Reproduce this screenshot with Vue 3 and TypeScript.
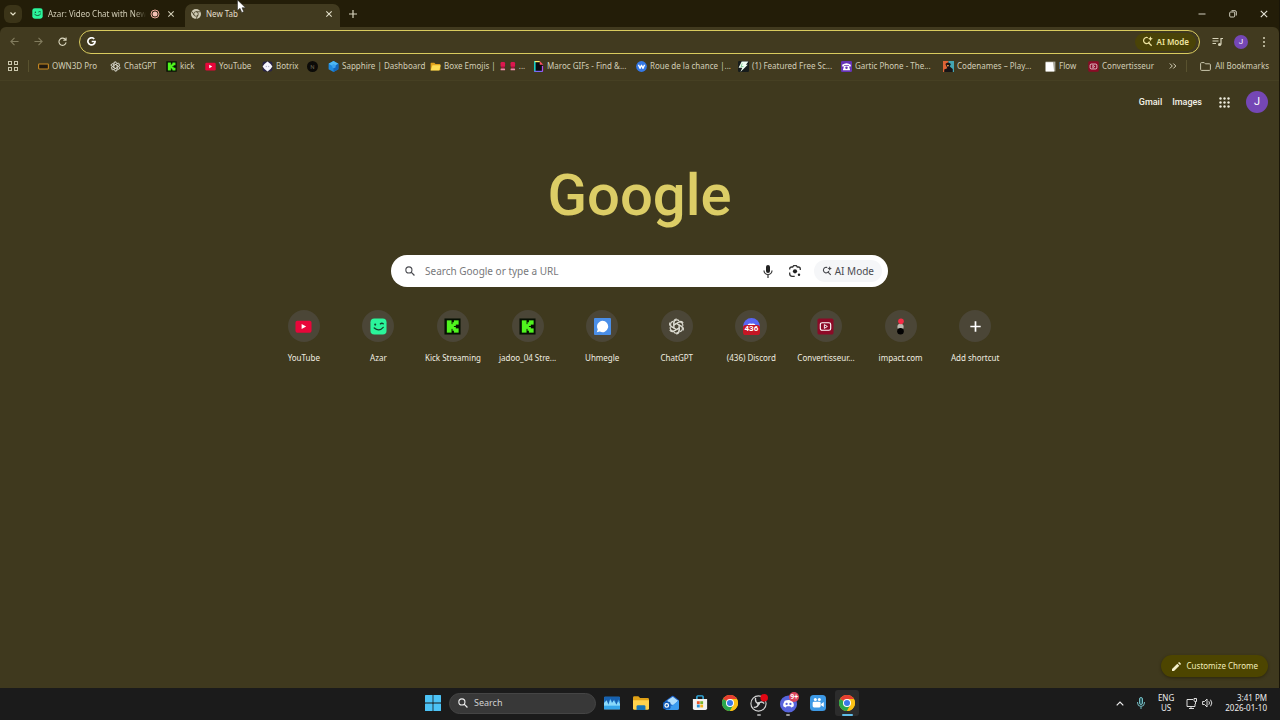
<script setup lang="ts">
import { ref } from 'vue'

interface Item {
  icon: string
  label: string
}

const address = ref('')
const query = ref('')
const taskQuery = ref('')

const bookmarks: Item[] = [
  { icon: 'own3d', label: 'OWN3D Pro' },
  { icon: 'chatgpt', label: 'ChatGPT' },
  { icon: 'kick', label: 'kick' },
  { icon: 'youtube', label: 'YouTube' },
  { icon: 'botrix', label: 'Botrix' },
  { icon: 'ncircle', label: '' },
  { icon: 'sapphire', label: 'Sapphire | Dashboard' },
  { icon: 'folder', label: 'Boxe Emojis |' },
  { icon: 'giphy', label: 'Maroc GIFs - Find &...' },
  { icon: 'wheel', label: 'Roue de la chance |...' },
  { icon: 'bolt', label: '(1) Featured Free Sc...' },
  { icon: 'gartic', label: 'Gartic Phone - The...' },
  { icon: 'codenames', label: 'Codenames – Play...' },
  { icon: 'flow', label: 'Flow' },
  { icon: 'convert', label: 'Convertisseur' },
]

const shortcuts: Item[] = [
  { icon: 'youtube', label: 'YouTube' },
  { icon: 'azar', label: 'Azar' },
  { icon: 'kick', label: 'Kick Streaming' },
  { icon: 'kick', label: 'jadoo_04 Stre...' },
  { icon: 'uhmegle', label: 'Uhmegle' },
  { icon: 'chatgpt', label: 'ChatGPT' },
  { icon: 'discord436', label: '(436) Discord' },
  { icon: 'convert', label: 'Convertisseur...' },
  { icon: 'impact', label: 'impact.com' },
  { icon: 'plus', label: 'Add shortcut' },
]

const apps = [
  { icon: 'widgets', label: 'Monitor', state: '' },
  { icon: 'explorer', label: 'File Explorer', state: '' },
  { icon: 'outlook', label: 'Outlook', state: '' },
  { icon: 'store', label: 'Microsoft Store', state: '' },
  { icon: 'chrome', label: 'Chrome', state: '' },
  { icon: 'obs', label: 'OBS Studio', state: 'open' },
  { icon: 'discord', label: 'Discord', state: 'open' },
  { icon: 'camera', label: 'Camera', state: '' },
  { icon: 'chrome', label: 'Chrome window', state: 'active' },
]
</script>

<template>
  <svg class="sprite" aria-hidden="true">
    <symbol id="youtube" viewBox="0 0 18 18">
      <rect x="0.5" y="3" width="17" height="12.500" rx="2" fill="#e8063a" />
      <path d="M7 6.300v5.400L11.800 9z" fill="#fff" />
    </symbol>
    <symbol id="azar" viewBox="0 0 18 18">
      <rect x="0.5" y="0.5" width="17" height="17" rx="4" fill="#2bf59b" />
      <circle cx="5.500" cy="7" r="1.100" fill="#14412c" />
      <path d="M11 6.200q1.600-1.200 3 0M4.500 10.500q5 4.500 9.500-.6" fill="none" stroke="#14412c" stroke-width="1.400" stroke-linecap="round" />
    </symbol>
    <symbol id="kick" viewBox="0 0 18 18">
      <rect x="0.5" y="0.5" width="17" height="17" fill="#061003" />
      <g fill="#50f51e">
        <rect x="3" y="2.500" width="5" height="13" />
        <rect x="7" y="6.500" width="3.500" height="5" />
        <rect x="9" y="4.500" width="3.500" height="4" />
        <rect x="9" y="9.500" width="3.500" height="4" />
        <rect x="10.500" y="2.500" width="5" height="4.500" />
        <rect x="10.500" y="11" width="5" height="4.500" />
      </g>
    </symbol>
    <symbol id="uhmegle" viewBox="0 0 18 18">
      <rect width="18" height="18" rx="1" fill="#4a8ee8" />
      <path d="M9 3a6 6 0 1 1-2.800 11.300L3 15l1-3A6 6 0 0 1 9 3z" fill="#fff" />
    </symbol>
    <symbol id="chatgpt" viewBox="0 0 18 18">
      <g fill="none" stroke="#deddd3" stroke-width="1.200">
        <path v-for="n in 6" :key="n" :transform="`rotate(${n * 60} 9 9)`" d="M6.200 10.600V5.200a3.200 3.200 0 0 1 5.600-2.100M7.500 6.600l4.300-2.500a3.200 3.200 0 0 1 4.300 1.200" />
      </g>
    </symbol>
    <symbol id="discord436" viewBox="0 0 18 18">
      <circle cx="9" cy="9" r="9" fill="#5865f2" />
      <path d="M4.500 8q1-3 4.500-2 3.500-1 4.500 2z" fill="#fff" />
      <rect y="7.500" width="18" height="10.500" rx="3" fill="#c51624" />
    </symbol>
    <symbol id="convert" viewBox="0 0 18 18">
      <rect x="0.5" y="0.5" width="17" height="17" rx="2" fill="#8c0a27" />
      <rect x="3.500" y="5" width="11" height="8" rx="2" fill="none" stroke="#fff" stroke-width="1.200" />
      <path d="M7.800 7v4l3.200-2z" fill="none" stroke="#fff" />
    </symbol>
    <symbol id="impact" viewBox="0 0 18 18">
      <circle cx="9" cy="9.500" r="3.300" fill="#b9b7ae" />
      <circle cx="9.500" cy="3.500" r="3" fill="#f32b45" />
      <circle cx="9" cy="14" r="3.500" fill="#020202" />
    </symbol>
    <symbol id="plus" viewBox="0 0 18 18">
      <path d="M9 3.500v11M3.500 9h11" stroke="#fff" stroke-width="1.800" />
    </symbol>
    <symbol id="own3d" viewBox="0 0 18 18">
      <rect x="1" y="5" width="16" height="8" rx="1" fill="#211a10" stroke="#c98a22" stroke-width="1.800" />
    </symbol>
    <symbol id="botrix" viewBox="0 0 18 18">
      <rect x="1" y="1" width="16" height="16" rx="3" fill="#292447" />
      <path d="m9 1 4 3 1 1 3 4-3 4-1 1-4 3-4-3-1-1-3-4 3-4 1-1z" fill="#f7f6ff" />
      <path d="M7 8v2M11 8v2" stroke="#8a86a8" stroke-width="1.200" />
    </symbol>
    <symbol id="sapphire" viewBox="0 0 18 18">
      <path d="m9 0 8 4.500v9L9 18l-8-4.500v-9z" fill="#1f8ade" />
      <path d="m9 0 8 4.500-8 4.500-8-4.500z" fill="#4db8f5" />
      <path d="M9 9v9l8-4.500v-9z" fill="#1466bb" />
      <path d="m6 7 3-2 4 2-1 4-4 1z" fill="#3ba2ed" />
    </symbol>
    <symbol id="folder" viewBox="0 0 18 18">
      <path d="M1 4q0-1 1-1h5l2 2h7q1 0 1 1v9H1z" fill="#e2a31c" />
      <path d="M4 7h13.500L15 15.500H1z" fill="#ffdd53" />
    </symbol>
    <symbol id="lips" viewBox="0 0 10 14">
      <rect x="2" y="0" width="7" height="8" rx="2" fill="#dc174f" />
      <rect x="3" y="7" width="5" height="3" fill="#a70e3c" />
      <rect x="2" y="10" width="7" height="3" rx="1" fill="#ef8ba9" />
    </symbol>
    <symbol id="giphy" viewBox="0 0 18 18">
      <path d="M3 1h8l5 5v11H3z" fill="#0b0910" />
      <path d="M3 0v17" stroke="#19d8cf" stroke-width="2.500" />
      <path d="M2 17h14" stroke="#7c68f4" stroke-width="2" />
      <path d="M15.500 8v9" stroke="#b24cf0" stroke-width="2" />
      <path d="M11 0v6h6z" fill="#fa5262" />
      <path d="M3 1h8" stroke="#fff16b" stroke-width="2" />
    </symbol>
    <symbol id="wheel" viewBox="0 0 18 18">
      <circle cx="9" cy="9" r="8.800" fill="#3478e5" />
      <path d="m4 6 2.500 6L9 7l2.500 5L14 6" fill="none" stroke="#fff" stroke-width="2.200" stroke-linejoin="round" />
    </symbol>
    <symbol id="bolt" viewBox="0 0 18 18">
      <rect width="18" height="18" rx="2" fill="#171c1c" />
      <path d="M6 1h11l-4 5h3L4 18l3-7H1z" fill="#f1fff4" />
      <path d="m7 4-2 5h4" stroke="#49b268" fill="none" />
    </symbol>
    <symbol id="gartic" viewBox="0 0 18 18">
      <rect width="18" height="18" rx="2" fill="#6533b6" />
      <path d="M2 6q7-5 14 0v3h-3V7H5v2H2zM5 8h8l2 7H3z" fill="#fff" />
      <circle cx="9" cy="11" r="2" fill="#6533b6" />
    </symbol>
    <symbol id="codenames" viewBox="0 0 18 18">
      <rect width="9" height="18" fill="#df6436" />
      <rect x="9" width="9" height="18" fill="#43a5b2" />
      <path d="M4 5q4-5 9 0l-2 4 5 4v5H2v-4l5-2z" fill="#171416" />
      <path d="m6 6 4 1-2 3z" fill="#f6a052" />
    </symbol>
    <symbol id="flow" viewBox="0 0 18 18">
      <rect x="1" y="1" width="16" height="16" fill="#aaa89c" />
      <path d="M1 2h12l2 15H1z" fill="#fff" />
    </symbol>
    <symbol id="chrome" viewBox="0 0 18 18">
      <circle cx="9" cy="9" r="9" fill="#fbc116" />
      <path d="M9 9 1.200 4.500A9 9 0 0 1 16.800 4.500z" fill="#e63e31" />
      <path d="M9 9 1.200 4.500A9 9 0 0 0 9 18l4-7z" fill="#2aa64c" />
      <path d="M9 4.500h7.800A9 9 0 0 1 9 18l4-7z" fill="#fbc116" />
      <circle cx="9" cy="9" r="4.500" fill="#fff" />
      <circle cx="9" cy="9" r="3.400" fill="#3978e8" />
    </symbol>
    <symbol id="chrome-mono" viewBox="0 0 18 18">
      <circle cx="9" cy="9" r="9" fill="#cfcbb5" />
      <g fill="none" stroke="#413a1f" stroke-width="1.500">
        <circle cx="9" cy="9" r="4" />
        <path d="M9 5h8M5.500 11 1.500 4.500M12.500 11 9 18" />
      </g>
      <circle cx="9" cy="9" r="2.600" fill="#cfcbb5" />
    </symbol>
    <symbol id="spark-search" viewBox="0 0 18 18">
      <path d="M9.500 2.800A5 5 0 1 0 12.300 9M10.800 11l5 5" fill="none" stroke="currentColor" stroke-width="2" />
      <path d="M13.800.5q.5 3.500 4 4-3.500.5-4 4-.5-3.500-4-4 3.500-.5 4-4z" fill="currentColor" />
    </symbol>
    <symbol id="search" viewBox="0 0 18 18">
      <circle cx="7" cy="7" r="5.500" fill="none" stroke="currentColor" stroke-width="2" />
      <path d="m11 11 6 6" stroke="currentColor" stroke-width="2.200" />
    </symbol>
    <symbol id="widgets" viewBox="0 0 18 18">
      <rect x="0" y="2" width="18" height="14" rx="1" fill="#2f8fdc" />
      <path d="M0 3q0-1 1-1h16q1 0 1 1v4l-2-2-2 6-2-6-2 4-3-5-2 6-2-3-2 3z" fill="#1761b0" />
      <path d="m0 16V9l3-3 2 5 2-6 2 4 2-3 3 5 2-4 2 3v6z" fill="#8ad9fa" />
      <path d="M0 12h18v4H0z" fill="#35a6ea" />
    </symbol>
    <symbol id="explorer" viewBox="0 0 18 18">
      <path d="M0 3q0-1.500 1.500-1.500H6l2 2h8.500Q18 3.500 18 5v11H0z" fill="#e0a116" />
      <path d="M0 6h18v9q0 1.500-1.500 1.500h-15Q0 16.500 0 15z" fill="#ffd34d" />
      <path d="M4 17v-4q0-1.500 1.500-1.500h7q1.500 0 1.500 1.500v4z" fill="#1574b8" />
    </symbol>
    <symbol id="outlook" viewBox="0 0 18 18">
      <path d="m2 7 8-6q1-.5 2 0l6 5v9q0 2-2 2H4q-2 0-2-2z" fill="#1b5fc4" />
      <path d="m5 6 6-4 6 4.500-5 5-6-2z" fill="#aeddfb" />
      <path d="m3 11 7 1 8-6v9q0 2-2 2H5q-2 0-2-2z" fill="#3b9bee" />
      <rect y="7.500" width="8.500" height="8.500" rx="2" fill="#125bb4" />
      <circle cx="4.200" cy="11.700" r="2" fill="none" stroke="#fff" stroke-width="1.400" />
    </symbol>
    <symbol id="store" viewBox="0 0 18 18">
      <path d="M5.500 5V2q0-1 1-1h5q1 0 1 1v3" fill="none" stroke="#35b6ee" stroke-width="1.600" />
      <path d="M1 4.500h16V15q0 2-2 2H3q-2 0-2-2z" fill="#f2f2f2" />
      <rect x="5.500" y="7" width="3.200" height="3.200" fill="#ec5428" />
      <rect x="9.300" y="7" width="3.200" height="3.200" fill="#7bb82d" />
      <rect x="5.500" y="10.800" width="3.200" height="3.200" fill="#248fd5" />
      <rect x="9.300" y="10.800" width="3.200" height="3.200" fill="#f5b31c" />
    </symbol>
    <symbol id="obs" viewBox="0 0 20 20">
      <circle cx="10" cy="10" r="8" fill="#1d1d1f" stroke="#d4d4d4" stroke-width="1.200" />
      <path d="M10 10q-4-1-3-6M10 10q3-3 6 0M10 10q0 4-5 4" fill="none" stroke="#d4d4d4" stroke-width="1.400" />
      <circle cx="10" cy="10" r="1.600" fill="#d4d4d4" />
      <circle cx="16" cy="4" r="4" fill="#e30613" />
    </symbol>
    <symbol id="discord" viewBox="0 0 20 20">
      <circle cx="10" cy="10.500" r="9" fill="#5764dc" />
      <path d="M6 7q4-1.500 8 0 2 3 1.500 6-2 1.500-3 1l-.5-1H8l-.5 1q-1 .5-3-1Q4 10 6 7z" fill="#fff" />
      <circle cx="8" cy="10.500" r="1.200" fill="#5764dc" />
      <circle cx="12" cy="10.500" r="1.200" fill="#5764dc" />
    </symbol>
    <symbol id="camera" viewBox="0 0 18 18">
      <rect width="18" height="18" rx="4" fill="#3d99e5" />
      <circle cx="6" cy="5" r="1.700" fill="#fff" />
      <circle cx="10.500" cy="5" r="1.700" fill="#fff" />
      <rect x="3" y="7.500" width="9" height="6.500" rx="1.500" fill="#fff" />
      <path d="m12.500 10 3-2v5.500l-3-2z" fill="#fff" />
    </symbol>
    <symbol id="close" viewBox="0 0 12 12">
      <path d="m2 2 8 8M10 2l-8 8" stroke="currentColor" stroke-width="1.600" />
    </symbol>
  </svg>

  <div class="desktop">
    <div class="browser">
      <header class="tabs">
        <button class="tab-search" aria-label="Search tabs">
          <svg width="6" height="4" viewBox="0 0 6 4"><path d="m.5.5 2.500 2.500L5.500.5" fill="none" stroke="#e6e2c8" stroke-width="1.200" /></svg>
        </button>
        <div class="tab">
          <svg class="tab-icon"><use href="#azar" /></svg>
          <span class="tab-title fade">Azar: Video Chat with New</span>
          <svg class="recording" viewBox="0 0 10 10"><circle cx="5" cy="5" r="4" fill="none" stroke="#e9a99b" /><circle cx="5" cy="5" r="2.500" fill="#f3c0b4" /></svg>
          <button class="close" aria-label="Close Azar"><svg><use href="#close" /></svg></button>
        </div>
        <div class="tab current">
          <svg class="tab-icon small"><use href="#chrome-mono" /></svg>
          <span class="tab-title">New Tab</span>
          <button class="close" aria-label="Close New Tab"><svg><use href="#close" /></svg></button>
        </div>
        <button class="new-tab" aria-label="New tab">
          <svg width="8" height="8" viewBox="0 0 8 8"><path d="M4 0v8M0 4h8" stroke="#d8d4bd" stroke-width="1.200" /></svg>
        </button>
        <div class="window-buttons">
          <button aria-label="Minimize"><svg viewBox="0 0 8 8"><path d="M.5 4h7" stroke="#d2cfbe" /></svg></button>
          <button aria-label="Restore"><svg viewBox="0 0 8 8"><rect x=".7" y="2" width="5" height="5" rx="1" fill="none" stroke="#d2cfbe" /><path d="M2.500.7H6q1.300 0 1.300 1.300v3.500" fill="none" stroke="#d2cfbe" /></svg></button>
          <button aria-label="Close window"><svg viewBox="0 0 8 8"><path d="m.8.8 6.400 6.400M7.200.8.8 7.200" stroke="#e6e3d6" stroke-width="1.100" /></svg></button>
        </div>
      </header>

      <div class="toolbar">
        <button class="nav dim" aria-label="Back"><svg viewBox="0 0 10 10"><path d="M9.500 5H1M5 1 1 5l4 4" /></svg></button>
        <button class="nav dim" aria-label="Forward"><svg viewBox="0 0 10 10"><path d="M.5 5H9M5 1l4 4-4 4" /></svg></button>
        <button class="nav" aria-label="Reload"><svg viewBox="0 0 10 10"><path d="M8.500 3.200A4 4 0 1 0 9 6M9 .5v3.200H5.800" /></svg></button>
        <div class="omnibox">
          <svg class="g" viewBox="0 0 10 10" aria-hidden="true"><path d="M8 2.200A4 4 0 1 0 9 5H5.200" fill="none" stroke="#fff" stroke-width="1.900" /></svg>
          <input v-model="address" aria-label="Address and search bar" />
          <button class="omni-ai"><svg><use href="#spark-search" /></svg>AI Mode</button>
        </div>
        <button class="tool" aria-label="Media controls">
          <svg width="11" height="10" viewBox="0 0 11 10"><path d="M.5 1.500h6M.5 4h6M.5 6.500H4M9 7.500V1.500h2" fill="none" stroke="#d7d3b9" stroke-width="1.200" /><circle cx="7.600" cy="7.500" r="1.600" fill="#d7d3b9" /></svg>
        </button>
        <button class="avatar mini" aria-label="Profile">J</button>
        <button class="tool" aria-label="Chrome menu">
          <svg width="4" height="10" viewBox="0 0 4 10" fill="#d7d3b9"><circle cx="2" cy="1" r="1" /><circle cx="2" cy="5" r="1" /><circle cx="2" cy="9" r="1" /></svg>
        </button>
      </div>

      <nav class="bookmarks" aria-label="Bookmarks">
        <button class="grid-button" aria-label="Tab groups">
          <svg width="10" height="10" viewBox="0 0 10 10" fill="none" stroke="#cbc7ad"><rect x=".5" y=".5" width="3" height="3" /><rect x="6.500" y=".5" width="3" height="3" /><rect x=".5" y="6.500" width="3" height="3" /><rect x="6.500" y="6.500" width="3" height="3" /></svg>
        </button>
        <div class="bookmark-list">
          <a v-for="b in bookmarks" :key="b.icon" href="#" class="bookmark">
            <span v-if="b.icon === 'ncircle'" class="n-icon">N</span>
            <svg v-else class="favicon"><use :href="'#' + b.icon" /></svg>
            <span v-if="b.label">{{ b.label }}</span>
            <template v-if="b.icon === 'folder'">
              <svg class="lips"><use href="#lips" /></svg>
              <svg class="lips"><use href="#lips" /></svg>
              <span>...</span>
            </template>
          </a>
        </div>
        <button class="more" aria-label="More bookmarks">
          <svg width="8" height="6" viewBox="0 0 8 6"><path d="m.8.5 2.500 2.500L.8 5.500M4.300.5 6.800 3 4.300 5.500" fill="none" stroke="#d7d3b9" /></svg>
        </button>
        <button class="all">
          <svg width="11" height="9" viewBox="0 0 11 9"><path d="M.6 7.400V1.600q0-1 1-1h2.600l1.200 1.200h4q1 0 1 1v4.600q0 1-1 1H1.600q-1 0-1-1z" fill="none" stroke="#cbc7ad" /></svg>
          All Bookmarks
        </button>
      </nav>

      <main class="page">
        <div class="account">
          <a href="#">Gmail</a>
          <a href="#">Images</a>
          <button class="apps" aria-label="Google apps">
            <svg width="11" height="11" viewBox="0 0 11 11" fill="#efedde"><template v-for="r in 3" :key="r"><circle v-for="c in 3" :key="c" :cx="c * 4 - 2.5" :cy="r * 4 - 2.5" r="1.200" /></template></svg>
          </button>
          <button class="avatar" aria-label="Google account">J</button>
        </div>

        <h1 class="logo">Google</h1>

        <form class="searchbox" @submit.prevent>
          <svg class="magnifier"><use href="#search" /></svg>
          <input v-model="query" placeholder="Search Google or type a URL" aria-label="Search Google or type a URL" />
          <button type="button" class="voice" aria-label="Search by voice">
            <svg width="10" height="13" viewBox="0 0 10 13"><rect x="3" y="0" width="4" height="8" rx="2" fill="#222" /><path d="M1 5.500a4 4 0 0 0 8 0M5 9.500V13" fill="none" stroke="#333" stroke-width="1.200" /></svg>
          </button>
          <button type="button" class="lens" aria-label="Search by image">
            <svg width="12" height="12" viewBox="0 0 12 12"><path d="M.7 4.500V4q0-2 2-2h1l1-1.300h2.600L8.300 2h1q2 0 2 2v1M.7 7.500v1.300q0 2.500 2.500 2.500h2.500" fill="none" stroke="#333" stroke-width="1.300" /><circle cx="6" cy="6.300" r="2.100" fill="#222" /><circle cx="10" cy="9.800" r="1.200" fill="#222" /></svg>
          </button>
          <button type="button" class="ai"><svg><use href="#spark-search" /></svg>AI Mode</button>
        </form>

        <div class="shortcuts">
          <a v-for="s in shortcuts" :key="s.label" href="#" class="shortcut">
            <span class="disc">
              <svg><use :href="'#' + s.icon" /></svg>
              <span v-if="s.icon === 'discord436'" class="count">436</span>
            </span>
            <span class="label">{{ s.label }}</span>
          </a>
        </div>

        <button class="customize">
          <svg width="9" height="9" viewBox="0 0 9 9" fill="#f5f1cb"><path d="M0 9V7l5.300-5.300 2 2L2 9zM6 1l.8-.8q.3-.3.6 0L8.800 1.600q.3.300 0 .6L8 3z" /></svg>
          Customize Chrome
        </button>
      </main>
    </div>

    <footer class="taskbar">
      <button class="start" aria-label="Start">
        <svg width="16" height="16" viewBox="0 0 16 16" fill="#4cc3f6"><rect width="7.600" height="7.600" rx=".5" /><rect x="8.400" width="7.600" height="7.600" rx=".5" /><rect y="8.400" width="7.600" height="7.600" rx=".5" /><rect x="8.400" y="8.400" width="7.600" height="7.600" rx=".5" /></svg>
      </button>
      <label class="task-search">
        <svg><use href="#search" /></svg>
        <input v-model="taskQuery" placeholder="Search" aria-label="Search" />
      </label>
      <div class="task-apps">
        <button v-for="a in apps" :key="a.label" :class="a.state" :aria-label="a.label">
          <svg :class="a.icon"><use :href="'#' + a.icon" /></svg>
          <span v-if="a.icon === 'discord'" class="badge">9+</span>
        </button>
      </div>
      <div class="tray">
        <svg class="caret" width="8" height="5" viewBox="0 0 8 5"><path d="M.7 4.300 4 1l3.300 3.300" fill="none" stroke="#eee" stroke-width="1.200" /></svg>
        <svg class="mic" width="8" height="12" viewBox="0 0 8 12"><rect x="2.500" y=".5" width="3" height="7" rx="1.500" fill="#27565b" stroke="#75bdc3" /><path d="M.6 5v1a3.400 3.400 0 0 0 6.800 0V5M4 9.500V12" fill="none" stroke="#75bdc3" /></svg>
        <span class="lang">ENG<br />US</span>
        <svg class="network" width="12" height="11" viewBox="0 0 12 11"><path d="M7 1.500H1v7h8V6M3 10.500h5M5 8.500v2M8 .5v2q0 1 1.200 1h1.300V.5zM9.500 3.500V6" fill="none" stroke="#ddd" /></svg>
        <svg class="volume" width="11" height="10" viewBox="0 0 11 10"><path d="M.6 3.500v3h1.900L5 9V1L2.500 3.500zM6.800 3.300q1.400 1.700 0 3.400M8.500 1.700q2.700 3.300 0 6.600" fill="none" stroke="#ddd" /></svg>
        <span class="clock">3:41 PM<br />2026-01-10</span>
      </div>
    </footer>

    <svg class="cursor" width="9" height="13" viewBox="0 0 9 13"><path d="M.5 0v10.500l2.500-2.200L4.800 12.500l1.900-.8L5 7.700h3.500z" fill="#fff" stroke="#222" stroke-width=".5" /></svg>
  </div>
</template>

<style>
html,
body {
  background: #191917;
}
</style>

<style scoped>
* {
  box-sizing: border-box;
}
.sprite {
  display: none;
}
.desktop {
  min-height: 100vh;
  display: flex;
  flex-direction: column;
  font: 8px/12px "Noto Sans", "Open Sans", sans-serif;
  color: #d2ceb7;
}
button,
input {
  font: inherit;
  color: inherit;
  border: 0;
  padding: 0;
  margin: 0;
  background: none;
  outline: 0;
}
button {
  display: flex;
  align-items: center;
  justify-content: center;
  flex: none;
}
a {
  color: inherit;
  text-decoration: none;
}
svg {
  flex: none;
  display: block;
}
.browser {
  flex: 1;
  display: flex;
  flex-direction: column;
  background: #231d08;
  border-right: 1px solid #191508;
}
.tabs {
  display: flex;
  align-items: center;
  height: 27px;
  padding: 0 0 0 4px;
}
.tab-search {
  width: 18px;
  height: 18px;
  border-radius: 6px;
  background: #3b3418;
}
.tab {
  display: flex;
  align-items: center;
  width: 160px;
  height: 23px;
  padding: 0 7px 0 10px;
}
.tab.current {
  width: 155px;
  background: #413a1f;
  border-radius: 7px 7px 0 0;
  align-self: flex-end;
  margin-left: 3px;
  padding: 0 7px 4px 6px;
  color: #e3dfca;
}
.tab-icon {
  width: 11px;
  height: 11px;
}
.tab-icon.small {
  width: 10px;
  height: 10px;
}
.tab-title {
  flex: 1;
  min-width: 0;
  margin-left: 5px;
  white-space: nowrap;
}
.fade {
  mask-image: linear-gradient(90deg, #000 88%, transparent);
}
.recording {
  width: 10px;
  height: 10px;
  margin: 0 7px 0 4px;
}
.close {
  width: 8px;
  height: 12px;
}
.close svg {
  width: 8px;
  height: 8px;
}
.new-tab {
  width: 18px;
  height: 18px;
  margin-left: 4px;
}
.window-buttons {
  display: flex;
  margin-left: auto;
}
.window-buttons button {
  width: 31px;
  height: 27px;
}
.window-buttons svg {
  width: 8px;
  height: 8px;
}
.toolbar {
  display: flex;
  align-items: center;
  height: 29px;
  padding: 0 8px 0 2px;
  background: #413a1f;
  border-radius: 6px 6px 0 0;
}
.nav {
  width: 24px;
  height: 24px;
}
.nav svg {
  width: 9px;
  height: 9px;
  fill: none;
  stroke: #dad6be;
  stroke-width: 1.2;
}
.nav.dim svg {
  stroke: #827c5e;
}
.omnibox {
  flex: 1;
  display: flex;
  align-items: center;
  height: 24px;
  margin: 0 9px 0 5px;
  padding: 0 3px 0 7px;
  border: 1px solid #d9cb5e;
  border-radius: 12px;
}
.g {
  width: 9px;
  height: 9px;
}
.omnibox input {
  flex: 1;
  min-width: 0;
}
.omni-ai {
  height: 18px;
  padding: 0 7px;
  gap: 4px;
  border-radius: 9px;
  background: #4a4307;
  color: #efe5a1;
  font-weight: 600;
}
.omni-ai svg {
  width: 11px;
  height: 11px;
}
.tool {
  width: 16px;
  height: 20px;
}
.avatar {
  width: 22px;
  height: 22px;
  border-radius: 50%;
  background: #7547b5;
  color: #fff;
  font: 11px/16px Roboto, sans-serif;
}
.avatar.mini {
  width: 14px;
  height: 14px;
  margin: 0 9px;
  font-size: 8px;
}
.toolbar .tool:last-child {
  width: 14px;
}
.bookmarks {
  display: flex;
  align-items: center;
  height: 25px;
  padding: 0 10px 4px 8px;
  background: #413a1f;
  border-bottom: 1px solid #464023;
}
.grid-button {
  width: 21px;
  height: 12px;
  padding-right: 10px;
  border-right: 1px solid #59522f;
}
.bookmark-list {
  flex: 1;
  display: grid;
  grid-template-columns: 72px 56px 39px 57px 45px 21px 102px 103px 103px 102px 103px 102px 102px 43px 1fr;
  margin-left: 9px;
}
.bookmark {
  display: flex;
  align-items: center;
  gap: 3px;
  white-space: nowrap;
}
.favicon {
  width: 11px;
  height: 11px;
}
.n-icon {
  width: 11px;
  height: 11px;
  border-radius: 50%;
  background: #0c0b08;
  color: #67624d;
  font: 6px/11px Roboto, sans-serif;
  text-align: center;
}
.lips {
  width: 7px;
  height: 9px;
}
.more {
  width: 20px;
}
.all {
  gap: 4px;
  margin-left: 3px;
  padding-left: 13px;
  border-left: 1px solid #59522f;
}
.page {
  flex: 1;
  display: flex;
  flex-direction: column;
  align-items: center;
  padding: 10px 11px 11px;
  background: #3f391e;
}
.account {
  align-self: flex-end;
  display: flex;
  align-items: center;
  gap: 10px;
  color: #f5f3e8;
  font: 500 9px/12px Roboto, sans-serif;
}
.apps {
  width: 24px;
}
.logo {
  margin: 44px 0 0;
  font: 500 58px/76px Roboto, sans-serif;
  color: #dccd66;
}
.searchbox {
  display: flex;
  align-items: center;
  width: 497px;
  max-width: 100%;
  height: 32px;
  margin-top: 22px;
  padding: 0 6px 0 14px;
  border-radius: 16px;
  background: #fff;
  color: #4a4b50;
  font-size: 10px;
}
.magnifier {
  width: 10px;
  height: 10px;
}
.searchbox input {
  flex: 1;
  min-width: 0;
  height: 24px;
  margin-left: 10px;
}
.searchbox input::placeholder {
  color: #77787b;
  opacity: 1;
}
.voice,
.lens {
  width: 27px;
  height: 24px;
}
.ai {
  height: 22px;
  margin-left: 5px;
  padding: 0 8px;
  gap: 3px;
  border-radius: 11px;
  background: #f5f6f8;
}
.ai svg {
  width: 10px;
  height: 10px;
}
.shortcuts {
  display: grid;
  grid-template-columns: repeat(10, 1fr);
  width: 746px;
  max-width: 100%;
  margin-top: 23px;
  color: #efede0;
}
.shortcut {
  display: flex;
  flex-direction: column;
  align-items: center;
  gap: 10px;
  white-space: nowrap;
}
.disc {
  position: relative;
  display: grid;
  place-items: center;
  width: 32px;
  height: 32px;
  border-radius: 50%;
  background: #4b4637;
}
.disc svg {
  width: 17px;
  height: 17px;
}
.count {
  position: absolute;
  top: 14px;
  font: 700 8px/10px Roboto, sans-serif;
  color: #fff;
}
.customize {
  align-self: flex-end;
  gap: 6px;
  height: 22px;
  margin-top: auto;
  padding: 0 10px 0 11px;
  border-radius: 11px;
  background: #4d4500;
  color: #f2edbb;
  box-shadow: 0 1px 3px #2c270f;
}
.taskbar {
  display: flex;
  align-items: center;
  height: 32px;
  padding: 0 13px 2px 425px;
  background: #1b1b1b;
  color: #eee;
}
.task-search {
  display: flex;
  align-items: center;
  gap: 6px;
  width: 147px;
  height: 21px;
  margin-left: 8px;
  padding: 0 8px;
  border: 1px solid #454545;
  border-radius: 11px;
  background: #383838;
  font-size: 9px;
}
.task-search svg {
  width: 10px;
  height: 10px;
}
.task-search input {
  flex: 1;
  min-width: 0;
}
.task-search input::placeholder {
  color: #d0d0d0;
  opacity: 1;
}
.task-apps {
  display: flex;
  justify-content: space-between;
  width: 259px;
  margin-left: 4px;
}
.task-apps button {
  position: relative;
  width: 24px;
  height: 26px;
  border-radius: 3px;
}
.task-apps svg {
  width: 16px;
  height: 16px;
}
.task-apps .obs,
.task-apps .discord {
  width: 19px;
  height: 19px;
}
.badge {
  position: absolute;
  top: 2px;
  right: 1px;
  width: 10px;
  height: 10px;
  border-radius: 50%;
  background: #d9455c;
  color: #fff;
  font: 700 7px/10px Roboto, sans-serif;
}
.task-apps .active {
  background: #2c2c2c;
}
.open::after,
.active::after {
  content: "";
  position: absolute;
  bottom: 0;
  width: 4px;
  height: 2px;
  border-radius: 1px;
  background: #999;
}
.active::after {
  width: 11px;
  background: #60bde8;
}
.tray {
  display: flex;
  align-items: center;
  margin-left: auto;
  line-height: 10px;
}
.mic {
  margin: 0 13px;
}
.lang {
  text-align: center;
}
.network {
  margin: 0 4px 0 12px;
}
.clock {
  margin-left: 12px;
  text-align: right;
}
.cursor {
  position: absolute;
  left: 237px;
  top: 0;
}
</style>
